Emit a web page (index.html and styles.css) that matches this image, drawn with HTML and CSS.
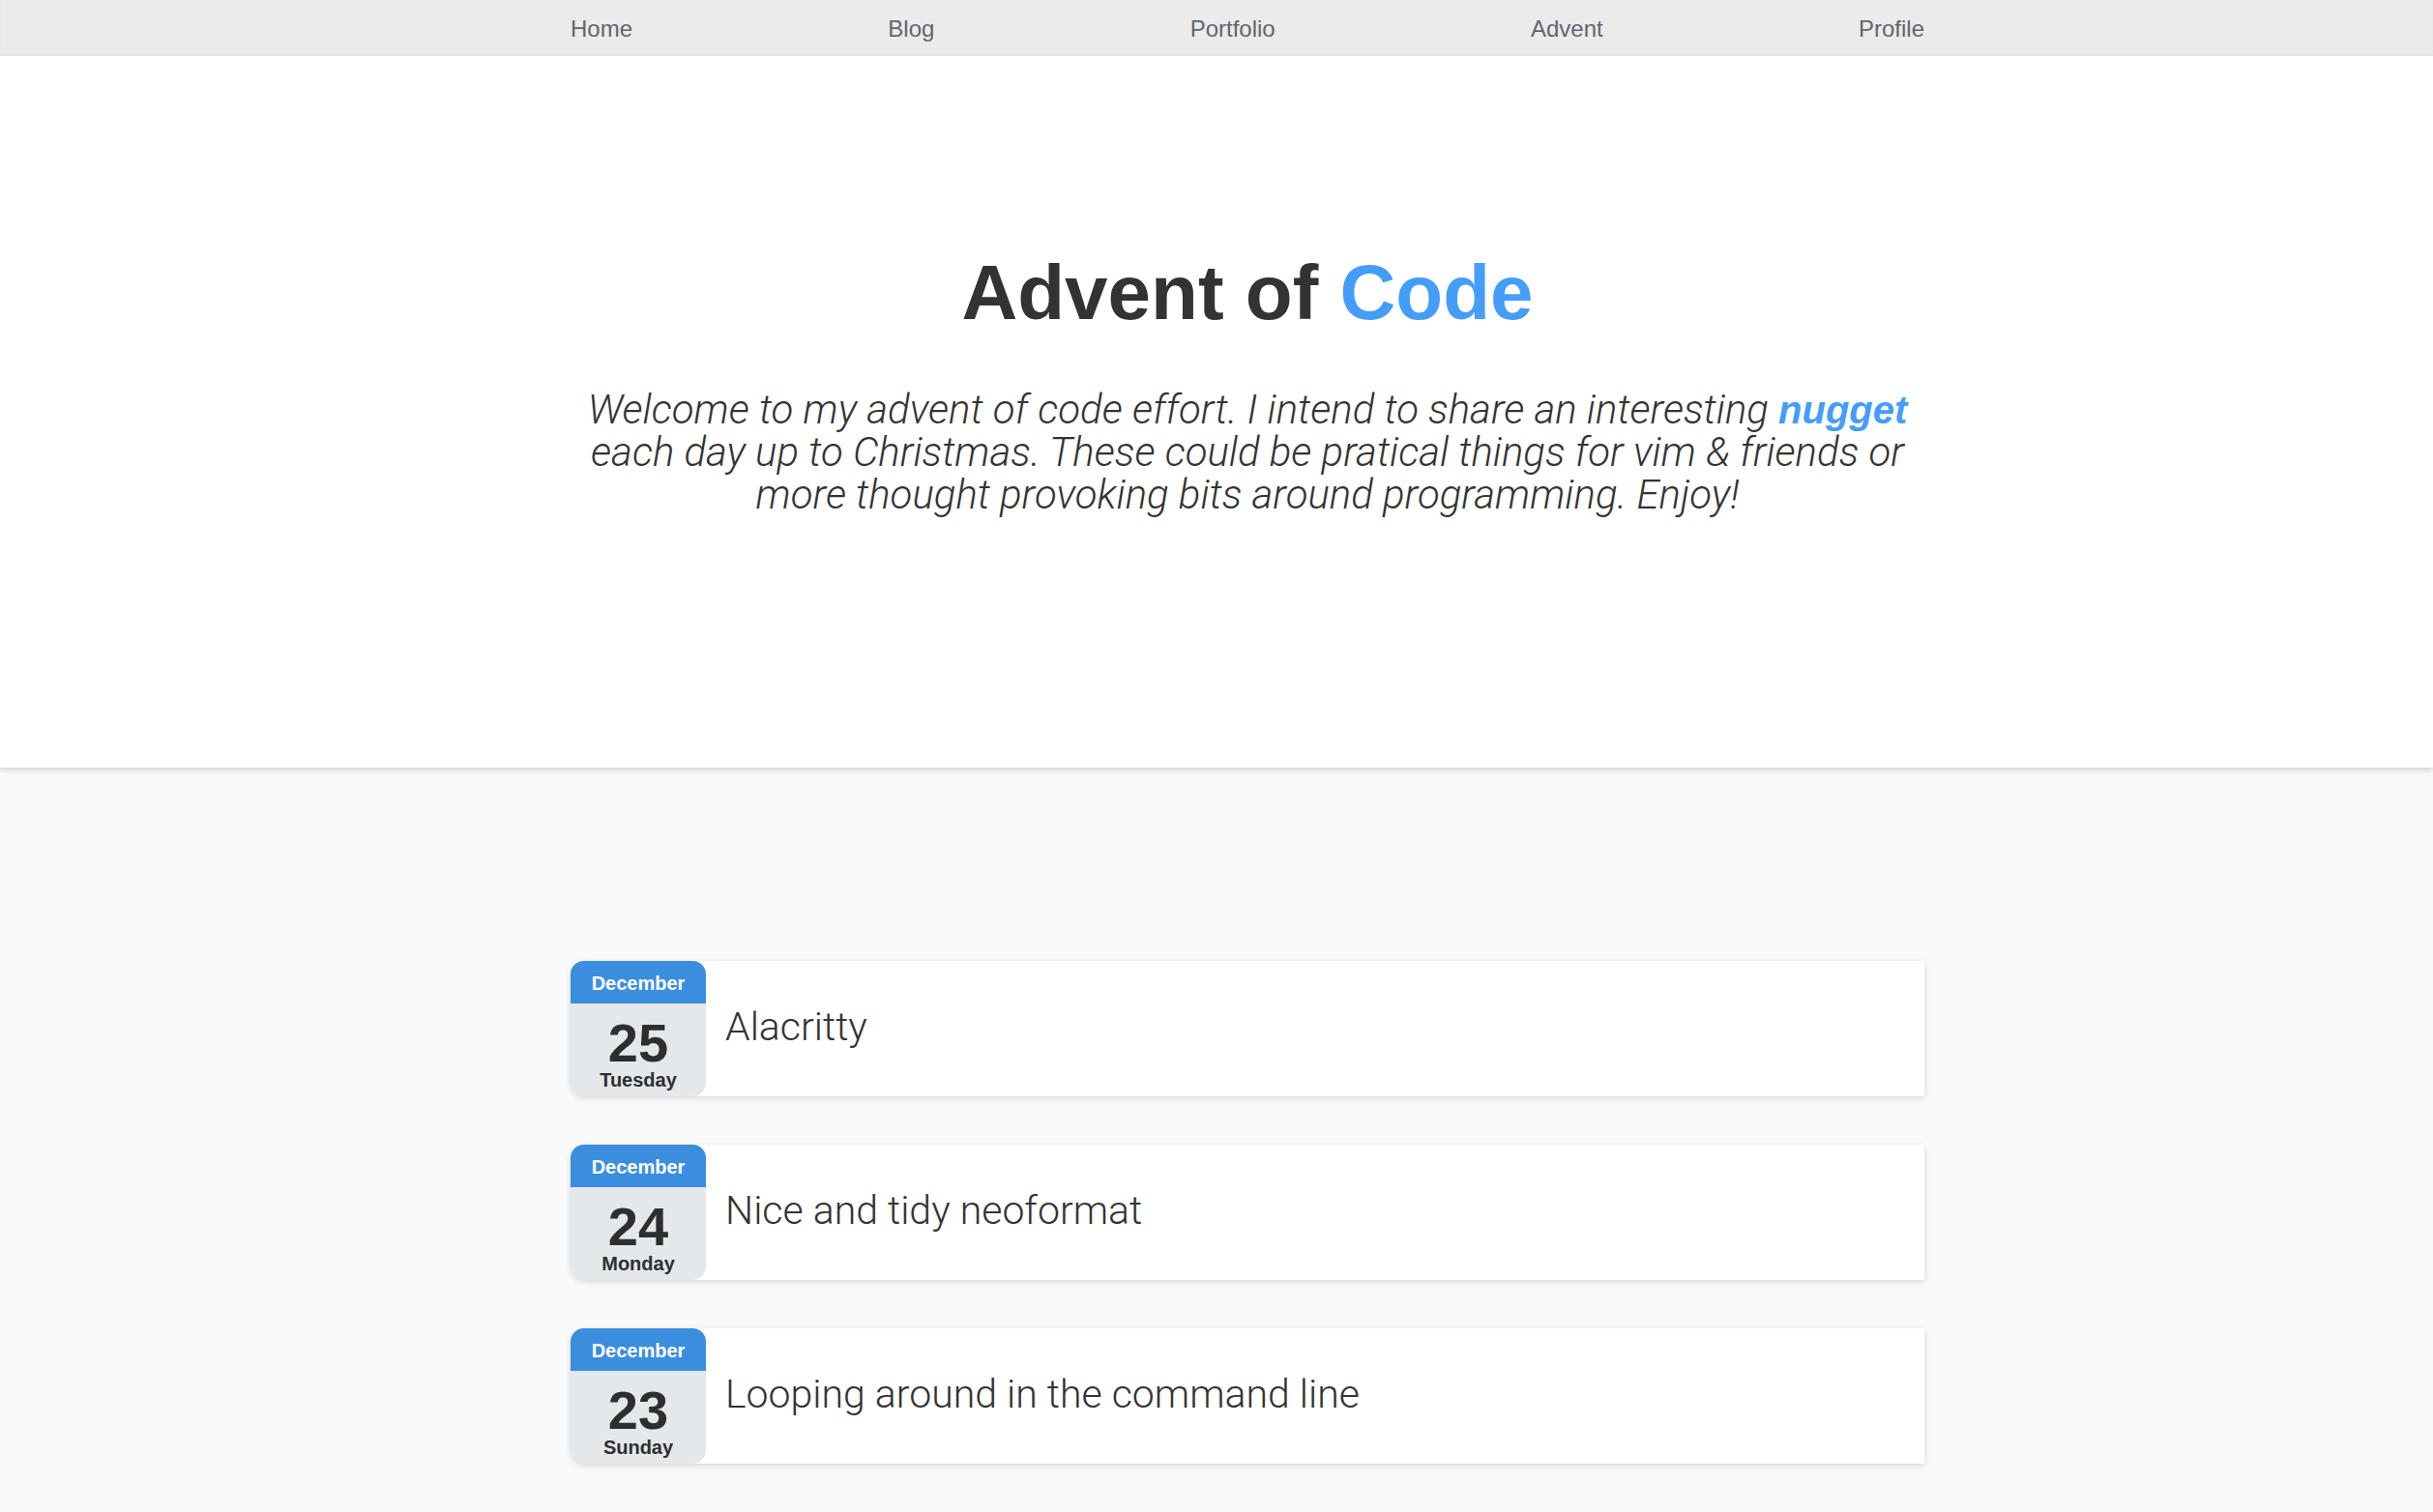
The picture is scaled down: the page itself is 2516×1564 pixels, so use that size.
FILE: index.html
```html
<!DOCTYPE html>
<html lang="en">
<head>
<meta charset="utf-8">
<meta name="viewport" content="width=device-width, initial-scale=1">
<title>Advent of Code</title>
<link rel="stylesheet" href="styles.css">
</head>
<body>
<nav class="nav">
  <ul class="nav-list container">
    <li><a href="#">Home</a></li>
    <li><a href="#">Blog</a></li>
    <li><a href="#">Portfolio</a></li>
    <li><a href="#">Advent</a></li>
    <li><a href="#">Profile</a></li>
  </ul>
</nav>
<header class="hero">
  <div class="container">
    <h1 class="hero-title">Advent of <span class="accent">Code</span></h1>
    <p class="hero-intro">Welcome to my advent of code effort. I intend to share an interesting <strong class="accent">nugget</strong> each day up to Christmas. These could be pratical things for vim &amp; friends or more thought provoking bits around programming. Enjoy!</p>
  </div>
</header>
<main class="posts">
  <div class="post-list container">
    <a class="post" href="#">
      <time class="date" datetime="2018-12-25"><span class="month">December</span><span class="day">25</span><span class="weekday">Tuesday</span></time>
      <h2 class="post-title">Alacritty</h2>
    </a>
    <a class="post" href="#">
      <time class="date" datetime="2018-12-24"><span class="month">December</span><span class="day">24</span><span class="weekday">Monday</span></time>
      <h2 class="post-title">Nice and tidy neoformat</h2>
    </a>
    <a class="post" href="#">
      <time class="date" datetime="2018-12-23"><span class="month">December</span><span class="day">23</span><span class="weekday">Sunday</span></time>
      <h2 class="post-title">Looping around in the command line</h2>
    </a>
  </div>
</main>
</body>
</html>
```
FILE: styles.css
```css
* {
  box-sizing: border-box;
}

body {
  margin: 0;
  background: #f9f9f9;
  color: #333;
  font-family: "Liberation Sans", Arial, sans-serif;
}

a {
  color: inherit;
  text-decoration: none;
}

.container {
  width: 100%;
  max-width: 1400px;
  margin: 0 auto;
}

.nav,
.hero,
.posts {
  padding-left: 64px;
}

.nav {
  position: relative;
  background: #ebebeb;
  box-shadow: inset 0 -2px 2px rgba(0, 0, 0, 0.03);
  color: #5f666d;
}

.nav-list {
  display: flex;
  justify-content: space-between;
  height: 58px;
  padding: 0;
  list-style: none;
  font-size: 24px;
  line-height: 60px;
}

.hero {
  padding-top: 193px;
  padding-bottom: 260px;
  background: #fff;
  box-shadow: 0 1px 6px 1px rgba(0, 0, 0, 0.17);
  text-align: center;
}

.hero-title {
  margin: 0 0 47px;
  font-size: 80px;
  line-height: 104px;
}

.hero-intro {
  margin: 0;
  font-family: Roboto, "Liberation Sans", sans-serif;
  font-size: 42px;
  font-style: italic;
  font-weight: 300;
  line-height: 44px;
}

.accent {
  color: #449df8;
}

.hero-intro .accent {
  font-family: "Liberation Sans", Arial, sans-serif;
  font-size: 40px;
  font-weight: 700;
  line-height: 40px;
}

.posts {
  padding-top: 200px;
  padding-bottom: 50px;
}

.post-list {
  display: grid;
  gap: 50px;
}

.post {
  display: flex;
  align-items: center;
  gap: 20px;
  border-radius: 16px 0 0 16px;
  background: #fff;
  box-shadow: 0 2px 6px rgba(0, 0, 0, 0.14);
}

.date {
  display: flex;
  flex-direction: column;
  width: 140px;
  height: 140px;
  overflow: hidden;
  border-radius: 14px;
  background: #e5e8eb;
  color: #2d2f2f;
  font-weight: bold;
  text-align: center;
}

.month {
  height: 44px;
  margin-bottom: 13px;
  background: #3b8ede;
  color: #fff;
  font-size: 20px;
  line-height: 46px;
}

.day {
  font-size: 56px;
  line-height: 56px;
}

.weekday {
  font-size: 20px;
  line-height: 20px;
}

.post-title {
  margin: 0;
  padding-bottom: 4px;
  font-family: Roboto, "Liberation Sans", sans-serif;
  font-size: 41px;
  font-weight: 300;
  line-height: 44px;
}
```
